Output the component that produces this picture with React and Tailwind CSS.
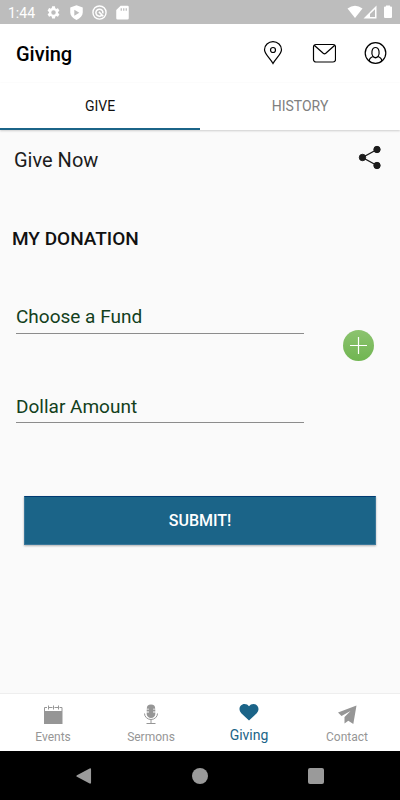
import React from "react";

function StatusBar() {
  return (
    <div className="flex h-6 items-center bg-[#bdbdbd] pl-2 pr-[7px] text-white">
      <span className="w-[38px] pt-px text-sm leading-6">1:44</span>
      <div className="flex flex-1 items-center gap-2">
        <svg className="size-[15px]" viewBox="0 0 24 24" fill="currentColor" aria-hidden="true">
          <path d="M19.14 12.94c.04-.3.06-.61.06-.94s-.02-.64-.07-.94l2.03-1.58a.5.5 0 0 0 .12-.61l-1.92-3.32a.5.5 0 0 0-.59-.22l-2.39.96a7 7 0 0 0-1.62-.94l-.36-2.54A.48.48 0 0 0 13.92 2h-3.84a.48.48 0 0 0-.47.41l-.36 2.54c-.59.24-1.13.57-1.62.94l-2.39-.96a.48.48 0 0 0-.59.22L2.74 8.87a.48.48 0 0 0 .12.61l2.03 1.58a6 6 0 0 0 0 1.88l-2.03 1.58a.5.5 0 0 0-.12.61l1.92 3.32c.12.22.37.29.59.22l2.39-.96c.5.38 1.03.7 1.62.94l.36 2.54c.05.24.24.41.48.41h3.84c.24 0 .44-.17.47-.41l.36-2.54a7 7 0 0 0 1.62-.94l2.39.96c.22.08.47 0 .59-.22l1.92-3.32a.48.48 0 0 0-.12-.61zM12 15.6a3.6 3.6 0 1 1 0-7.2 3.6 3.6 0 0 1 0 7.2z" />
        </svg>
        <svg className="size-[15px]" viewBox="0 0 24 24" fill="currentColor" aria-hidden="true">
          <path fillRule="evenodd" d="M12 .5 2 4v8c0 5 4 9 10 12 6-3 10-7 10-12V4zM8.500 7.500 16.500 12.300 8.500 17z" />
        </svg>
        <svg className="size-[15px]" viewBox="0 0 24 24" fill="none" stroke="currentColor" aria-hidden="true">
          <circle cx="12" cy="12" r="10.500" strokeWidth="2.200" />
          <path d="M15.500 16.500A5.600 5.600 0 1 1 17.300 13.500M11 11l7 7" strokeWidth="2.500" />
        </svg>
        <svg className="size-[15px]" viewBox="0 0 24 24" fill="currentColor" aria-hidden="true">
          <path fillRule="evenodd" d="M9 1h11a2 2 0 0 1 2 2v18a2 2 0 0 1-2 2H4a2 2 0 0 1-2-2V8zm0 4v4h2V5zm4 0v4h2V5zm4 0v4h2V5z" />
        </svg>
      </div>
      <svg className="h-[14px] w-[46px]" viewBox="0 0 46 14" fill="currentColor" aria-hidden="true">
        <path d="M.500 3.500Q8-2.200 15.500 3.500L8 13z" />
        <path fillRule="evenodd" d="M16.500 13.500 29.500.500v13zm6.500-1.500h5V4.200l-5 4.800z" />
        <path d="M39 .500h4v1h1q1 0 1 1V12q0 1-1 1h-6q-1 0-1-1V2.500q0-1 1-1h1z" />
      </svg>
    </div>
  );
}

function Header() {
  return (
    <header className="flex h-[59px] items-center bg-white px-4 pr-3 text-black">
      <h1 className="flex-1 text-xl font-medium">Giving</h1>
      <div className="flex items-center gap-7 pb-0.5">
        <button type="button" aria-label="Locations">
          <svg className="h-6 w-[22px]" viewBox="0 0 22 24" fill="none" stroke="currentColor" strokeWidth="1.200">
            <path d="M11 22.500C8 17 2.500 13 2.500 8.700a8.500 8 0 0 1 17 0C19.500 13 14 17 11 22.500z" />
            <circle cx="11" cy="9" r="2.500" />
          </svg>
        </button>
        <button type="button" aria-label="Messages">
          <svg className="h-6 w-6" viewBox="0 0 24 24" fill="none" stroke="currentColor" strokeWidth="1.200">
            <rect x="1.500" y="3.500" width="22" height="17.500" rx="2.500" />
            <path d="m2.200 4.300 9 8q1.300 1 2.600 0l9-8" />
          </svg>
        </button>
        <button type="button" aria-label="Profile">
          <svg className="h-6 w-6" viewBox="0 0 24 24" fill="none" stroke="currentColor" strokeWidth="1.200">
            <circle cx="11.500" cy="12" r="10.300" />
            <path d="M9 15.500C7 13 7.500 6.500 11.500 6.500s4.500 6.500 2.500 9q-2.500 2.500-5 0zM5.200 20c0-2.500 1.200-3.500 3.800-4.500M17.800 20c0-2.500-1.200-3.500-3.800-4.500" />
          </svg>
        </button>
      </div>
    </header>
  );
}

function Tabs() {
  return (
    <div role="tablist" className="z-10 grid h-[47px] grid-cols-2 bg-white text-sm shadow-[0_1px_2px_rgba(0,0,0,0.18)]">
      <button type="button" role="tab" aria-selected="true" className="border-b-2 border-[#1b6488] text-[#111]">
        GIVE
      </button>
      <button type="button" role="tab" aria-selected="false" className="border-b-2 border-transparent text-[#808080]">
        HISTORY
      </button>
    </div>
  );
}

function GiveForm() {
  return (
    <main className="flex-1">
      <div className="flex items-center justify-between pl-[14px] pr-[17px] pt-3">
        <h2 className="pt-1 text-xl text-[#1c1c1c]">Give Now</h2>
        <button type="button" aria-label="Share" className="text-[#1c1c1c]">
          <svg className="size-[26px]" viewBox="0 0 26 26" fill="currentColor" stroke="currentColor">
            <path d="M20 4.500 5.500 12.500 20 20.500" fill="none" strokeWidth="1.400" />
            <circle cx="20" cy="4.500" r="3.200" />
            <circle cx="5.500" cy="12.500" r="3.200" />
            <circle cx="20" cy="20.500" r="3.200" />
          </svg>
        </button>
      </div>
      <form onSubmit={(event) => event.preventDefault()}>
        <h3 className="mt-[51px] px-3 text-[19px] leading-7 font-medium text-[#111]">MY DONATION</h3>
        <div className="mt-[49px] flex pl-4 pr-[26px]">
          <div className="flex flex-1 flex-col gap-[57px]">
            <select aria-label="Fund" className="h-8 w-full appearance-none border-b border-[#8c8c8c] bg-transparent p-0 text-[19px] text-[#12401c]">
              <option>Choose a Fund</option>
            </select>
            <input
              aria-label="Dollar Amount"
              placeholder="Dollar Amount"
              inputMode="decimal"
              className="h-8 w-full border-b border-[#8c8c8c] bg-transparent p-0 text-[19px] placeholder:text-[#12401c]"
            />
          </div>
          <button
            type="button"
            aria-label="Add fund"
            className="ml-[39px] mt-7 flex size-[31px] items-center justify-center rounded-full bg-linear-to-b from-[#8cc36f] to-[#70b551] text-white"
          >
            <svg className="size-[17px]" viewBox="0 0 17 17" stroke="currentColor" strokeWidth="1.200">
              <path d="M8.500 0v17M0 8.500h17" />
            </svg>
          </button>
        </div>
        <div className="mt-[73px] px-6">
          <button type="submit" className="h-[49px] w-full border border-[#3a779a] border-t-[#003a72] bg-[#1b6488] text-base font-medium text-white shadow-[0_1px_2px_rgba(0,0,0,0.3)]">
            SUBMIT!
          </button>
        </div>
      </form>
    </main>
  );
}

function EventsIcon() {
  return (
    <svg className="h-5 w-5" viewBox="0 0 20 20" fill="currentColor" aria-hidden="true">
      <path d="M1 7h18.500v13H1z" />
      <path d="M1.500 7V3.500H4m1.500 0h4m2 0h3.500m1.500 0H19V7M5.500 1.500v4m5-4v4m5-4v4" fill="none" stroke="currentColor" />
    </svg>
  );
}

function SermonsIcon() {
  return (
    <svg className="h-5 w-5" viewBox="0 0 20 20" fill="currentColor" aria-hidden="true">
      <path d="M5.800 4.500a4.200 4 0 0 1 8.400 0v.300H12v.800h2.300v2H12v.800h2.300V10a4.300 4 0 0 1-8.600 0V8.400H8v-.800H5.700v-2H8v-.800H5.800z" />
      <path d="M3.500 9.500a6.500 6 0 0 0 13 0M10 15.500V19m-4.500.500h9" fill="none" stroke="currentColor" />
    </svg>
  );
}

function GivingIcon() {
  return (
    <svg className="h-5 w-5" viewBox="0 0 20 20" fill="currentColor" aria-hidden="true">
      <path d="M10 18.500 2.500 11.500C-1.500 7.500 1 2 5.500 2Q8.500 2 10 4.300 11.500 2 14.500 2c4.500 0 7 5.500 3 9.500z" />
    </svg>
  );
}

function ContactIcon() {
  return (
    <svg className="h-5 w-5" viewBox="0 0 20 20" fill="currentColor" aria-hidden="true">
      <path d="M19.500 1.500 16.300 20l-5-3.300-3.800 2.800v-6.500L13.500 7 4.500 12 1 8.500z" />
    </svg>
  );
}

const destinations = [
  { name: "Events", Icon: EventsIcon },
  { name: "Sermons", Icon: SermonsIcon },
  { name: "Giving", Icon: GivingIcon, active: true },
  { name: "Contact", Icon: ContactIcon },
];

function BottomNav() {
  return (
    <nav className="grid h-[58px] grid-cols-4 border-t border-[#eeeeee] bg-white px-1">
      {destinations.map(({ name, Icon, active }) => (
        <a
          key={name}
          href={"#" + name.toLowerCase()}
          aria-current={active ? "page" : undefined}
          className={
            active
              ? "flex flex-col items-center gap-[3px] pt-2 text-sm leading-5 text-[#1b6488]"
              : "flex flex-col items-center gap-[3px] pt-[10px] text-xs leading-5 text-[#969696]"
          }
        >
          <Icon />
          <span>{name}</span>
        </a>
      ))}
    </nav>
  );
}

function SystemBar() {
  return (
    <div className="flex h-[49px] items-center justify-around bg-black px-[26px] text-[#9a9a9a]">
      <button type="button" aria-label="Back">
        <svg className="size-4" viewBox="0 0 17 17" fill="currentColor">
          <path d="M1 7.700 14.500.500q1.500-.500 1.500 1v14q0 1.500-1.500 1L1 9.300q-1.300-.800 0-1.600z" />
        </svg>
      </button>
      <button type="button" aria-label="Home" className="size-4 rounded-full bg-current" />
      <button type="button" aria-label="Recent apps" className="size-4 rounded-xs bg-current" />
    </div>
  );
}

export default function App() {
  return (
    <div className="flex min-h-screen flex-col bg-[#fafafa] font-[Roboto,sans-serif]">
      <StatusBar />
      <Header />
      <Tabs />
      <GiveForm />
      <BottomNav />
      <SystemBar />
    </div>
  );
}
